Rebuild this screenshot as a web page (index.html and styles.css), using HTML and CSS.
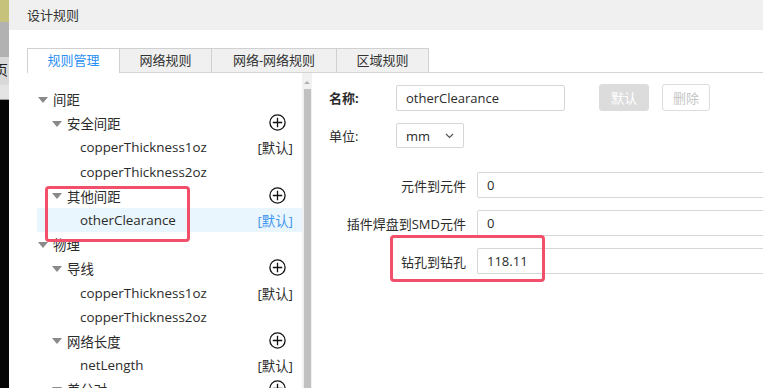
FILE: index.html
```html
<!DOCTYPE html>
<html lang="zh-CN">
<head>
    <meta charset="UTF-8">
    <meta name="viewport" content="width=device-width, initial-scale=1.0">
    <title>设计规则</title>
    <link rel="stylesheet" href="styles.css">
</head>
<body>
    <div class="fundo">
        <div class="faixa amarela"></div>
        <div class="faixa cinza"></div>
        <div class="faixa clara"><span>页</span></div>
        <div class="faixa marca"></div>
        <div class="faixa preta"></div>
    </div>

    <div class="janela">
        <div class="titulo">设计规则</div>

        <div class="abas">
            <div class="aba ativa">规则管理</div>
            <div class="aba">网络规则</div>
            <div class="aba larga">网络-网络规则</div>
            <div class="aba">区域规则</div>
        </div>

        <div class="conteudo">
            <div class="arvore">
                <div class="lista">
                    <div class="no n1"><i class="seta"></i>间距</div>
                    <div class="no n2"><i class="seta"></i>安全间距<span class="mais"><svg width="17" height="17" viewBox="0 0 17 17"><circle cx="8.5" cy="8.5" r="7.6" fill="none" stroke="#111" stroke-width="1.3"/><path d="M8.5 3.8v9.4M3.8 8.5h9.4" stroke="#111" stroke-width="1.3"/></svg></span></div>
                    <div class="no n3">copperThickness1oz<span class="padrao">[默认]</span></div>
                    <div class="no n3">copperThickness2oz</div>
                    <div class="no n2"><i class="seta"></i>其他间距<span class="mais"><svg width="17" height="17" viewBox="0 0 17 17"><circle cx="8.5" cy="8.5" r="7.6" fill="none" stroke="#111" stroke-width="1.3"/><path d="M8.5 3.8v9.4M3.8 8.5h9.4" stroke="#111" stroke-width="1.3"/></svg></span></div>
                    <div class="no n3 selecionado">otherClearance<span class="padrao">[默认]</span></div>
                    <div class="no n1"><i class="seta"></i>物理</div>
                    <div class="no n2"><i class="seta"></i>导线<span class="mais"><svg width="17" height="17" viewBox="0 0 17 17"><circle cx="8.5" cy="8.5" r="7.6" fill="none" stroke="#111" stroke-width="1.3"/><path d="M8.5 3.8v9.4M3.8 8.5h9.4" stroke="#111" stroke-width="1.3"/></svg></span></div>
                    <div class="no n3">copperThickness1oz<span class="padrao">[默认]</span></div>
                    <div class="no n3">copperThickness2oz</div>
                    <div class="no n2"><i class="seta"></i>网络长度<span class="mais"><svg width="17" height="17" viewBox="0 0 17 17"><circle cx="8.5" cy="8.5" r="7.6" fill="none" stroke="#111" stroke-width="1.3"/><path d="M8.5 3.8v9.4M3.8 8.5h9.4" stroke="#111" stroke-width="1.3"/></svg></span></div>
                    <div class="no n3">netLength<span class="padrao">[默认]</span></div>
                    <div class="no n2"><i class="seta"></i>差分对<span class="mais"><svg width="17" height="17" viewBox="0 0 17 17"><circle cx="8.5" cy="8.5" r="7.6" fill="none" stroke="#111" stroke-width="1.3"/><path d="M8.5 3.8v9.4M3.8 8.5h9.4" stroke="#111" stroke-width="1.3"/></svg></span></div>
                </div>
                <div class="rolagem">
                    <div class="seta-cima"></div>
                    <div class="polegar"></div>
                </div>
                <div class="destaque destaque-arvore"></div>
            </div>

            <div class="painel">
                <div class="linha">
                    <label class="rotulo forte">名称:</label>
                    <div class="campo nome">otherClearance</div>
                    <button class="btn cheio">默认</button>
                    <button class="btn vazio">删除</button>
                </div>
                <div class="linha unidade">
                    <label class="rotulo">单位:</label>
                    <div class="campo select">mm<svg width="9" height="6" viewBox="0 0 9 6"><path d="M1 1l3.5 3.5L8 1" fill="none" stroke="#555" stroke-width="1.2"/></svg></div>
                </div>
                <div class="regras">
                    <label class="regra-rotulo">元件到元件</label>
                    <div class="campo regra">0</div>
                    <label class="regra-rotulo">插件焊盘到SMD元件</label>
                    <div class="campo regra">0</div>
                    <label class="regra-rotulo">钻孔到钻孔</label>
                    <div class="campo regra">118.11</div>
                </div>
                <div class="destaque destaque-painel"></div>
            </div>
        </div>
    </div>
</body>
</html>
```

FILE: styles.css
```css
* {
    padding: 0px;
    margin: 0px;
    box-sizing: border-box;
}

body {
    display: flex;
    width: 763px;
    height: 388px;
    overflow: hidden;
    background-color: #000;
    font-family: "Open Sans", "Noto Sans CJK SC", sans-serif;
    font-size: 13px;
    color: #2b2b2b;
}

/* Fundo atras da janela */

.fundo {
    width: 9px;
    display: flex;
    flex-direction: column;
    overflow: hidden;
}

.faixa {
    flex-shrink: 0;
}

.amarela {
    height: 22px;
    background-color: #c6c27c;
}

.cinza {
    height: 35px;
    background-color: #b2b2b2;
}

.clara {
    height: 28px;
    background-color: #d9d9d9;
    overflow: hidden;
}

.clara span {
    display: block;
    margin-left: -6px;
    margin-top: 5px;
    font-size: 14px;
    line-height: 16px;
    color: #222;
}

.marca {
    height: 15px;
    background-color: #e4e4e4;
    border-bottom: 1px solid #999;
}

.preta {
    flex: 1;
    background-color: #050505;
}

/* Janela */

.janela {
    flex: 1;
    background-color: #fff;
    display: flex;
    flex-direction: column;
    overflow: hidden;
}

.titulo {
    height: 31px;
    background-color: #f0f0f0;
    padding-left: 18px;
    line-height: 30px;
    color: #333;
}

.abas {
    display: flex;
    margin-top: 18px;
    margin-left: 18px;
    border-bottom: 1px solid #d4d4d4;
}

.aba {
    width: 93px;
    height: 24px;
    line-height: 23px;
    text-align: center;
    background-color: #f0f0f0;
    border: 1px solid #d0d0d0;
    border-bottom: none;
    margin-left: -1px;
    color: #333;
}

.aba:first-child {
    margin-left: 0;
}

.larga {
    width: 126px;
}

.ativa {
    background-color: #fff;
    color: #2a8ff2;
    height: 25px;
    margin-bottom: -1px;
}

.conteudo {
    flex: 1;
    display: flex;
}

/* Arvore de regras */

.arvore {
    position: relative;
    display: flex;
    width: 285px;
    margin-left: 18px;
}

.lista {
    flex: 1;
    padding-top: 14px;
    font-size: 13.4px;
}

.no {
    position: relative;
    display: flex;
    align-items: center;
    height: 24.2px;
    white-space: nowrap;
    padding-right: 9px;
    color: #2b2b2b;
}

.n1 {
    padding-left: 11px;
}

.n2 {
    padding-left: 25px;
}

.n3 {
    padding-left: 53px;
}

.seta {
    width: 0;
    height: 0;
    border-left: 5px solid transparent;
    border-right: 5px solid transparent;
    border-top: 6px solid #8a8a8a;
    margin-right: 5px;
    margin-top: 1px;
}

.mais {
    position: absolute;
    right: 16px;
    top: 3px;
    height: 17px;
}

.padrao {
    margin-left: auto;
}

.selecionado {
    background-color: #eaf6fd;
    margin-left: 10px;
    padding-left: 43px;
}

.selecionado .padrao {
    color: #3d95ef;
}

.rolagem {
    width: 10px;
    background-color: #f1f1f1;
    padding: 8px 1px 0 1px;
    display: flex;
    flex-direction: column;
    align-items: center;
}

.seta-cima {
    width: 0;
    height: 0;
    border-left: 3px solid transparent;
    border-right: 3px solid transparent;
    border-bottom: 3px solid #b0b0b0;
    margin-bottom: 5px;
}

.polegar {
    flex: 1;
    width: 7px;
    background-color: #c1c1c1;
}

/* Marcacoes vermelhas */

.destaque {
    position: absolute;
    border: 3px solid #f2506a;
    border-radius: 4px;
}

.destaque-arvore {
    left: 18px;
    top: 113px;
    width: 145px;
    height: 56px;
}

.destaque-painel {
    left: 78px;
    top: 162px;
    width: 155px;
    height: 47px;
}

/* Painel de edicao */

.painel {
    position: relative;
    flex: 1;
    padding-left: 17px;
    padding-top: 11px;
    overflow: hidden;
}

.linha {
    display: flex;
    align-items: center;
}

.rotulo {
    width: 67px;
    color: #2b2b2b;
}

.forte {
    font-weight: bold;
}

.campo {
    height: 26px;
    border: 1px solid #d6d6d6;
    border-radius: 2px;
    padding-left: 9px;
    line-height: 24px;
    color: #2b2b2b;
    background-color: #fff;
}

.nome {
    width: 169px;
}

.btn {
    height: 27px;
    font-family: inherit;
    font-size: 13px;
    border-radius: 3px;
}

.cheio {
    width: 50px;
    margin-left: 34px;
    background-color: #dcdcdc;
    border: 1px solid #dcdcdc;
    color: #fff;
}

.vazio {
    width: 48px;
    margin-left: 13px;
    background-color: #fff;
    border: 1px solid #ddd;
    color: #c6c6c6;
}

.unidade {
    margin-top: 12px;
}

.select {
    width: 68px;
    height: 25px;
    display: flex;
    align-items: center;
    justify-content: space-between;
    padding-right: 9px;
}

.regras {
    display: grid;
    grid-template-columns: 137px 320px;
    column-gap: 11px;
    row-gap: 12px;
    margin-top: 24px;
    align-items: center;
}

.regra-rotulo {
    text-align: right;
    color: #2b2b2b;
}

.regra {
    width: 320px;
}
```
